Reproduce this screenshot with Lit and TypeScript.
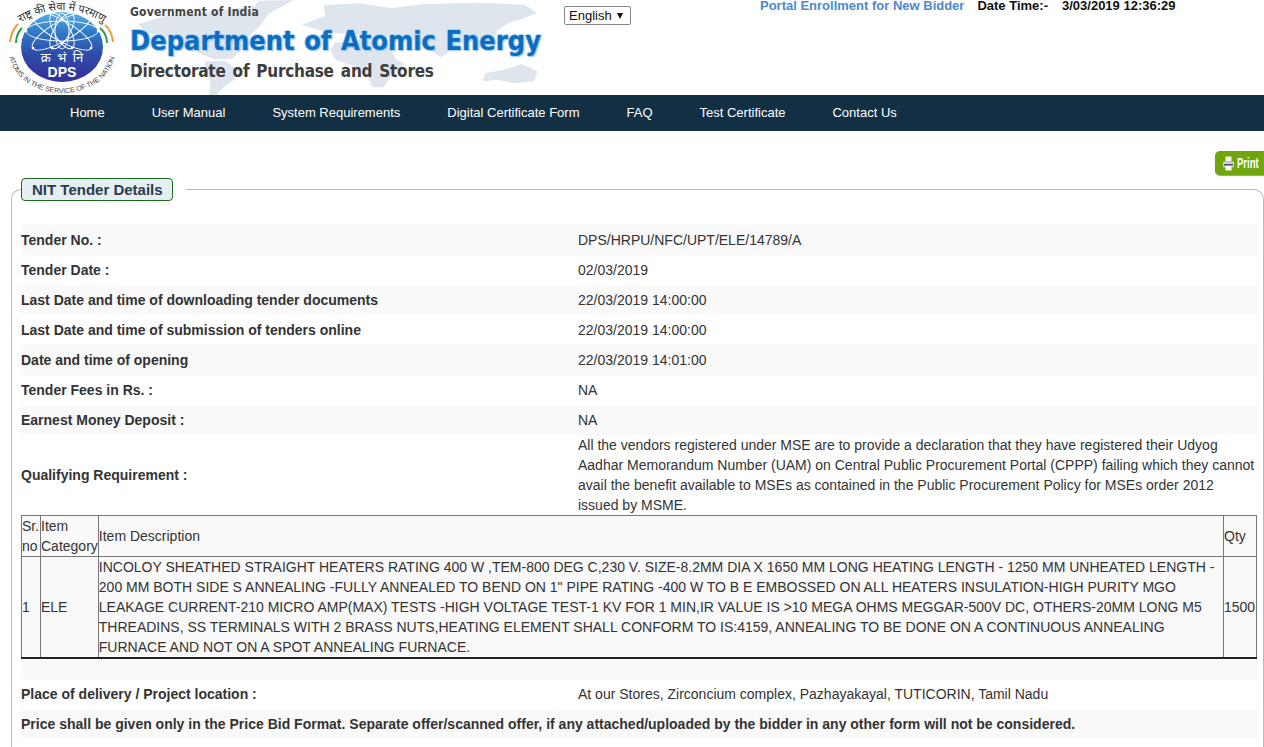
import { LitElement, html, css, svg } from 'lit';
import { customElement } from 'lit/decorators.js';

const NAV = ['Home', 'User Manual', 'System Requirements', 'Digital Certificate Form', 'FAQ', 'Test Certificate', 'Contact Us'];

const ROWS = [
    ['Tender No. :', 'DPS/HRPU/NFC/UPT/ELE/14789/A'],
    ['Tender Date :', '02/03/2019'],
    ['Last Date and time of downloading tender documents', '22/03/2019 14:00:00'],
    ['Last Date and time of submission of tenders online', '22/03/2019 14:00:00'],
    ['Date and time of opening', '22/03/2019 14:01:00'],
    ['Tender Fees in Rs. :', 'NA'],
    ['Earnest Money Deposit :', 'NA'],
];

const QUALIFYING = 'All the vendors registered under MSE are to provide a declaration that they have registered their Udyog Aadhar Memorandum Number (UAM) on Central Public Procurement Portal (CPPP) failing which they cannot avail the benefit available to MSEs as contained in the Public Procurement Policy for MSEs order 2012 issued by MSME.';

const DESCRIPTION = 'INCOLOY SHEATHED STRAIGHT HEATERS RATING 400 W ,TEM-800 DEG C,230 V. SIZE-8.2MM DIA X 1650 MM LONG HEATING LENGTH - 1250 MM UNHEATED LENGTH - 200 MM BOTH SIDE S ANNEALING -FULLY ANNEALED TO BEND ON 1" PIPE RATING -400 W TO B E EMBOSSED ON ALL HEATERS INSULATION-HIGH PURITY MGO LEAKAGE CURRENT-210 MICRO AMP(MAX) TESTS -HIGH VOLTAGE TEST-1 KV FOR 1 MIN,IR VALUE IS >10 MEGA OHMS MEGGAR-500V DC, OTHERS-20MM LONG M5 THREADINS, SS TERMINALS WITH 2 BRASS NUTS,HEATING ELEMENT SHALL CONFORM TO IS:4159, ANNEALING TO BE DONE ON A CONTINUOUS ANNEALING FURNACE AND NOT ON A SPOT ANNEALING FURNACE.';

// drawn in 3x units, so the outline can be read straight off a zoomed crop
const worldMap = svg`
    <svg class="map" width="430" height="95" viewBox="0 0 1290 285">
        <g fill="#dfe5ed">
            <path d="M40 72 L120 48 L210 42 L300 30 L390 18 L400 2 L505 0 L470 20 L430 42 L405 78 L372 110 L350 150 L322 176 L268 178 L222 160 L190 130 L120 110 L60 96 Z"/>
            <path d="M240 184 L300 182 L340 210 L326 240 L296 262 L274 285 L252 285 L256 244 L238 214 Z"/>
            <path d="M530 74 L600 48 L596 16 L700 10 L800 24 L900 12 L1060 8 L1200 14 L1236 40 L1190 56 L1150 70 L1116 92 L1104 130 L1060 146 L1030 118 L990 142 L950 172 L914 150 L870 120 L780 112 L700 104 L640 100 L590 92 Z"/>
            <path d="M630 128 L720 116 L790 136 L812 176 L840 192 L800 224 L776 262 L744 262 L720 214 L680 196 L632 180 L616 150 Z"/>
            <path d="M1082 220 L1150 206 L1190 192 L1238 214 L1226 244 L1170 250 L1120 240 L1072 244 Z"/>
        </g>
    </svg>`;

const logo = svg`
    <svg class="logo" width="125" height="95" viewBox="0 0 125 95">
        <defs>
            <linearGradient id="disc" x1="0" y1="0" x2="0" y2="1">
                <stop offset="0" stop-color="#5ab0e6"/>
                <stop offset="0.3" stop-color="#2f78c6"/>
                <stop offset="0.62" stop-color="#2f4aa6"/>
                <stop offset="1" stop-color="#34309a"/>
            </linearGradient>
            <clipPath id="disc-clip"><ellipse cx="62" cy="47" rx="41" ry="35"/></clipPath>
            <path id="arc-top" d="M14 27 Q62 -7 110 27"/>
            <path id="arc-bottom" d="M9 51 A53 42 0 0 0 115 51"/>
        </defs>
        <ellipse cx="62" cy="47" rx="41" ry="35" fill="url(#disc)"/>
        <g clip-path="url(#disc-clip)" fill="none" stroke="#fff" stroke-width="0.9">
            <ellipse cx="62" cy="31" rx="36" ry="10"/>
            <ellipse cx="62" cy="31" rx="34" ry="10" transform="rotate(30 62 31)"/>
            <ellipse cx="62" cy="31" rx="34" ry="10" transform="rotate(-30 62 31)"/>
            <ellipse cx="62" cy="31" rx="20" ry="8" transform="rotate(60 62 31)"/>
            <ellipse cx="62" cy="31" rx="20" ry="8" transform="rotate(-60 62 31)"/>
            <ellipse cx="62" cy="31" rx="18" ry="7" transform="rotate(90 62 31)"/>
        </g>
        <g fill="#fff">
            <circle cx="26" cy="31" r="1.3"/>
            <circle cx="98" cy="31" r="1.3"/>
            <circle cx="33" cy="48" r="1.3"/>
            <circle cx="91" cy="48" r="1.3"/>
            <circle cx="52" cy="48" r="1.3"/>
            <circle cx="72" cy="48" r="1.3"/>
        </g>
        <g fill="none" stroke-width="2">
            <path stroke="#f39a3c" d="M10 42 Q11 31 18 24"/>
            <path stroke="#2f9a4a" d="M16 43 Q16 34 22 28"/>
            <path stroke="#f39a3c" d="M113 42 Q112 31 105 25"/>
            <path stroke="#2f9a4a" d="M107 43 Q107 34 100 28"/>
        </g>
        <text class="logo-hi" x="62" y="62" text-anchor="middle" fill="#fff" font-size="13" word-spacing="3">क्र भं नि</text>
        <text class="logo-en" x="62" y="77" text-anchor="middle" fill="#fff" font-size="14" font-weight="bold">DPS</text>
        <text class="logo-hi" fill="#333" font-size="11"><textPath href="#arc-top" startOffset="50%" text-anchor="middle">राष्ट्र की सेवा में परमाणु</textPath></text>
        <text class="logo-en" fill="#444" font-size="7"><textPath href="#arc-bottom" startOffset="50%" text-anchor="middle">ATOMS IN THE SERVICE OF THE NATION</textPath></text>
    </svg>`;

const printer = svg`
    <svg class="printer" width="11" height="15" viewBox="0 0 11 15">
        <rect x="2.5" y="0.5" width="6" height="5" fill="#f2f2f2"/>
        <rect x="0" y="5.5" width="11" height="6" rx="1" fill="#c9d0d6"/>
        <rect x="1" y="8" width="9" height="1.5" fill="#556"/>
        <rect x="2.5" y="10" width="6" height="4.5" fill="#fff"/>
    </svg>`;

@customElement('app-root')
export class AppRoot extends LitElement {
    static styles = css`
        :host {
            display: block;
            font-family: 'Liberation Sans', Arial, sans-serif;
            font-size: 14px;
            line-height: 20px;
            color: #333;
            height: 747px;
            overflow: hidden;
            background: #fff;
        }

        .header {
            position: relative;
            display: flex;
            height: 95px;
            overflow: hidden;
        }

        .map {
            position: absolute;
            left: 125px;
            top: 0;
        }

        .logo {
            flex: none;
            position: relative;
        }

        .logo-hi {
            font-family: 'Noto Sans', 'DejaVu Sans', sans-serif;
        }

        .logo-en {
            font-family: 'Liberation Sans', sans-serif;
        }

        .titles {
            position: relative;
            flex: none;
            width: 434px;
            padding: 5px 0 0 5px;
            font-family: 'DejaVu Sans Condensed', 'DejaVu Sans', sans-serif;
            font-stretch: condensed;
            font-weight: bold;
            white-space: nowrap;
        }

        .gov {
            font-size: 12px;
            line-height: 14px;
            letter-spacing: 0.2px;
            color: #444;
        }

        .dept {
            margin-top: 5px;
            font-size: 27px;
            line-height: 34px;
            word-spacing: 1px;
            color: #0b6cc0;
            text-shadow: 1px 0 0 #a9d3f5, -1px 0 0 #a9d3f5, 0 1px 0 #a9d3f5, 0 -1px 0 #a9d3f5, 1px 1px 1px #7fb2e0;
        }

        .dir {
            margin-top: 3px;
            font-size: 17px;
            line-height: 20px;
            letter-spacing: -0.25px;
            word-spacing: 2px;
            color: #3d3d3d;
        }

        .lang {
            position: relative;
            flex: none;
            display: flex;
            align-items: center;
            gap: 5px;
            box-sizing: border-box;
            width: 67px;
            height: 19px;
            margin-top: 6px;
            padding-left: 4px;
            border: 1px solid #888;
            border-radius: 2px;
            font-size: 13px;
            color: #111;
            background: #fff;
        }

        .lang i {
            width: 0;
            height: 0;
            border-style: solid;
            border-width: 6px 3.5px 0;
            border-color: #111 transparent transparent;
        }

        .top-info {
            position: relative;
            flex: none;
            display: flex;
            margin-left: 129px;
            margin-top: -4px;
            font-size: 13px;
            font-weight: bold;
            color: #111;
            white-space: nowrap;
        }

        .enroll {
            color: #4a8ad0;
            margin-right: 13px;
        }

        .time-label {
            margin-right: 14px;
        }

        .nav {
            display: flex;
            gap: 47px;
            height: 36px;
            padding-left: 70px;
            align-items: center;
            background: #132f44;
            color: #fff;
            font-size: 13px;
        }

        .toolbar {
            display: flex;
            justify-content: flex-end;
            padding-top: 20px;
            height: 27px;
        }

        .print {
            display: flex;
            align-items: center;
            gap: 3px;
            box-sizing: border-box;
            width: 49px;
            height: 24px;
            padding-left: 8px;
            border-radius: 5px 0 0 5px;
            background: #6ea60c;
            box-shadow: 0 1px 1px #999;
            color: #fff;
            font-size: 14px;
            font-weight: bold;
            overflow: hidden;
        }

        .printer {
            flex: none;
        }

        .print span {
            display: inline-block;
            transform: scaleX(0.68);
            transform-origin: left center;
        }

        fieldset {
            margin: 0 0 0 11px;
            padding: 24px 6px 0 9px;
            min-width: 0;
            min-height: 600px;
            border: 1px solid #bbb;
            border-bottom: none;
            border-radius: 10px 10px 0 0;
        }

        legend {
            margin-left: 0;
            padding: 0 13px 0 0;
        }

        .legend-box {
            box-sizing: border-box;
            height: 23px;
            padding: 0 9px 0 10px;
            border: 1px solid #1c6a1c;
            border-radius: 4px;
            background: #e3eff1;
            color: #2e3a4c;
            font-size: 15px;
            font-weight: bold;
            line-height: 21px;
        }

        .row {
            display: grid;
            grid-template-columns: 557px 1fr;
            align-items: center;
            min-height: 30px;
        }

        .striped {
            background: #f9f9f9;
        }

        .row b {
            font-weight: bold;
        }

        .qualifying {
            height: 80px;
        }

        .items {
            box-sizing: border-box;
            width: 100%;
            border-collapse: collapse;
            border: 1px solid #222;
            border-bottom-width: 2px;
            background: #f9f9f9;
        }

        .items td {
            padding: 0;
            border: 1px solid #777;
        }

        .spacer {
            height: 20px;
            background: #f9f9f9;
        }

        .notice {
            display: flex;
            align-items: center;
            height: 30px;
            background: #f9f9f9;
            font-weight: bold;
        }
    `;

    render() {
        return html`
            <div class="header">
                ${worldMap}
                ${logo}
                <div class="titles">
                    <div class="gov">Government of India</div>
                    <div class="dept">Department of Atomic Energy</div>
                    <div class="dir">Directorate of Purchase and Stores</div>
                </div>
                <div class="lang">English <i></i></div>
                <div class="top-info">
                    <span class="enroll">Portal Enrollment for New Bidder</span>
                    <span class="time-label">Date Time:-</span>
                    <span>3/03/2019 12:36:29</span>
                </div>
            </div>
            <div class="nav">${NAV.map((item) => html`<span>${item}</span>`)}</div>
            <div class="toolbar"><div class="print">${printer}<span>Print</span></div></div>
            <fieldset>
                <legend><div class="legend-box">NIT Tender Details</div></legend>
                ${ROWS.map((row, i) => html`
                    <div class="row ${i % 2 === 0 ? 'striped' : ''}"><b>${row[0]}</b><span>${row[1]}</span></div>
                `)}
                <div class="row qualifying"><b>Qualifying Requirement :</b><span>${QUALIFYING}</span></div>
                <table class="items">
                    <tr>
                        <td style="width:18px">Sr. no</td>
                        <td style="width:56px">Item Category</td>
                        <td>Item Description</td>
                        <td style="width:32px">Qty</td>
                    </tr>
                    <tr>
                        <td>1</td>
                        <td>ELE</td>
                        <td>${DESCRIPTION}</td>
                        <td>1500</td>
                    </tr>
                </table>
                <div class="spacer"></div>
                <div class="row"><b>Place of delivery / Project location :</b><span>At our Stores, Zirconcium complex, Pazhayakayal, TUTICORIN, Tamil Nadu</span></div>
                <div class="notice">Price shall be given only in the Price Bid Format. Separate offer/scanned offer, if any attached/uploaded by the bidder in any other form will not be considered.</div>
            </fieldset>
        `;
    }
}
